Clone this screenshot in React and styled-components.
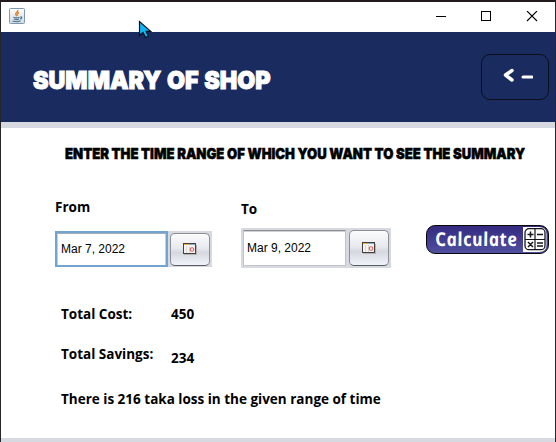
import React from "react";
import styled, { createGlobalStyle } from "styled-components";

const Global = createGlobalStyle`
  * { box-sizing: border-box; }
  body { margin: 0; background: #fff; overflow: hidden; }
`;

const Window = styled.div`
  position: relative;
  width: 556px;
  height: 442px;
  display: flex;
  flex-direction: column;
  background: #fff;
  border: 1px solid #25262a;
  border-top: 2px solid #231a1b;
  border-bottom: 0;
  color: #000;
`;

const TitleBar = styled.div`
  height: 30px;
  flex: none;
  display: flex;
  align-items: flex-start;
  justify-content: space-between;
  padding: 6px 17px 0 8px;
`;

const Controls = styled.div`
  display: flex;
  gap: 35px;
  padding-top: 3px;
`;

const Icon = styled.svg`
  display: block;
  flex: none;
`;

const Cursor = styled(Icon)`
  position: absolute;
  left: 137px;
  top: 18px;
`;

const Header = styled.header`
  height: 90px;
  flex: none;
  display: flex;
  justify-content: space-between;
  align-items: flex-start;
  padding: 22px 6px 0 32px;
  background: #192b5f;
`;

const Fitted = styled.span`
  display: block;
  white-space: nowrap;
  transform-origin: 0 50%;
  transform: scaleX(${(p) => p.$scale || 1});
`;

const Title = styled.h1`
  margin: 11px 0 0;
  width: 240px;
  color: #fff;
  font: 900 25px/30px Inter, sans-serif;
  word-spacing: 1px;
  -webkit-text-stroke: 1px #fff;
`;

const BackButton = styled.button`
  width: 68px;
  height: 46px;
  display: flex;
  align-items: center;
  justify-content: center;
  padding: 0 0 4px 1px;
  border: 1px solid #0c0f18;
  border-radius: 9px;
  background: transparent;
`;

const Strip = styled.div`
  height: ${(p) => p.$height}px;
  flex: none;
  background: #d6d9df;
`;

const Body = styled.main`
  height: 310px;
  flex: none;
`;

const Subtitle = styled.h2`
  margin: 0;
  padding: 16px 0 0 64px;
  height: 66px;
  font: 900 15px/20px Inter, sans-serif;
  -webkit-text-stroke: 0.5px #000;
`;

const Range = styled.section`
  display: flex;
  align-items: flex-start;
  height: 110px;
  padding-left: 54px;
`;

const Field = styled.div`
  width: ${(p) => p.$width}px;
  margin-right: ${(p) => p.$after}px;
  padding-top: ${(p) => p.$top}px;
`;

const Label = styled.div`
  font: 700 13.5px/18px "Open Sans", sans-serif;
`;

const Picker = styled.div`
  display: flex;
  align-items: center;
  justify-content: space-between;
  height: ${(p) => p.$height}px;
  margin-top: ${(p) => p.$gap}px;
  padding: ${(p) => (p.$focused ? "0 2px 0 0" : "0 2px")};
  background: #d6d9df;
`;

const DateInput = styled.div`
  width: ${(p) => (p.$focused ? 113 : 103)}px;
  height: 36px;
  display: flex;
  align-items: center;
  padding-left: ${(p) => (p.$focused ? 4 : 3)}px;
  background: #fff;
  border: ${(p) => (p.$focused ? "2px solid #73a4d1" : "1px solid #c0c2c5")};
  border-top-color: ${(p) => (p.$focused ? "#73a4d1" : "#8d8e91")};
  box-shadow: inset 0 1px 0 ${(p) => (p.$focused ? "#a5adb6" : "#cfd0d2")}${(p) => (p.$focused ? ", inset 1px 0 0 #c9ced4, inset -1px 0 0 #c9ced4" : "")};
  font: 12px/16px "Liberation Sans", Arial, sans-serif;
`;

const DateButton = styled.button`
  width: 40px;
  height: ${(p) => (p.$tall ? 36 : 33)}px;
  display: flex;
  align-items: center;
  justify-content: center;
  padding: 0;
  border: 1px solid #8b8e95;
  border-bottom-color: #555a65;
  border-radius: 5px;
  background: linear-gradient(#fbfbfc, #e8eaee 45%, #d5d8df 60%, #f0f3f8);
`;

const Calculate = styled.button`
  width: 123px;
  height: 29px;
  margin-top: 31px;
  display: flex;
  align-items: center;
  justify-content: space-between;
  padding: 0 1px 0 9px;
  border: 1px solid #08080c;
  border-radius: 9px;
  background: linear-gradient(#342a80, #50509f);
  color: #fff;
  font: italic 700 19px/24px "Open Sans", sans-serif;
`;

const CalculateText = styled.span`
  display: block;
  width: 82px;
  white-space: nowrap;
  transform: translate(-1px, -1px) skewX(10deg) scaleX(0.915);
  transform-origin: 0 50%;
  letter-spacing: 0.6px;
`;

const Results = styled.section`
  display: grid;
  grid-template-columns: 110px 1fr;
  padding-left: 60px;
`;

const Cell = styled(Label)`
  height: ${(p) => p.$height}px;
  padding-top: ${(p) => p.$top || 0}px;
`;

const Message = styled(Label)`
  padding: 1px 0 0 60px;
`;

function JavaIcon() {
  return (
    <Icon width="16" height="16" viewBox="0 0 16 16">
      <defs>
        <linearGradient id="java" x1="0" y1="0" x2="0" y2="1">
          <stop offset="0" stopColor="#fff" />
          <stop offset="1" stopColor="#d0d9e0" />
        </linearGradient>
      </defs>
      <rect x=".5" y=".5" width="15" height="15" rx="1" fill="url(#java)" stroke="#7e99ad" />
      <path d="M8.7 2c.8 2-2.7 2.5-2 4.4.2.7.9 1.1 1.1 1.8M10 4.5c-2 1-2 1.8-1.3 3" fill="none" stroke="#e7842f" strokeWidth="1.4" />
      <path d="M4.3 9.2c2 .8 5 .5 6.2 0M5 11c1.5.6 4 .6 5 0M3.5 13c2.5.8 6.5.7 8-.3M11.3 8.8c2-.3 1.8 1.7-.3 2.2" fill="none" stroke="#44718f" strokeWidth="1.2" />
    </Icon>
  );
}

function CalendarIcon() {
  return (
    <Icon width="14" height="12" viewBox="0 0 14 12">
      <path d="M1 11.5h13M13.5 2v9" stroke="#b2b4b8" />
      <rect x=".5" y=".5" width="12" height="10" fill="#f5f4f1" stroke="#46403c" />
      <path d="M1 1.5h5" stroke="#f2aa3a" />
      <path d="M6 1.5h6" stroke="#87a9d7" />
      <path d="M3.5 3v7M6.5 3v7" stroke="#d8d7d4" />
      <circle cx="9" cy="6.5" r="1.8" fill="#fff" stroke="#df5b58" strokeWidth="1.1" />
    </Icon>
  );
}

function CalculatorIcon() {
  return (
    <Icon width="24" height="25" viewBox="0 0 24 25">
      <path d="M0 0h16q7.5 0 7.5 7v11q0 7-7.5 7H0z" fill="#fff" />
      <rect x="2" y="1.7" width="20" height="21" rx="4" fill="#fff" stroke="#17171b" strokeWidth="1.3" />
      <path d="M12 2v20.5M2 12.5h20" stroke="#17171b" strokeWidth="1.2" />
      <path d="M4.5 7.5h6M7.5 4.5v6M14 7.5h6M5 15l5 5M10 15l-5 5M14 16h6M14 19h6" stroke="#17171b" strokeWidth="1.5" />
    </Icon>
  );
}

export default function App() {
  return (
    <>
      <Global />
      <Window>
        <TitleBar>
          <JavaIcon />
          <Controls>
            <Icon width="10" height="10"><path d="M0 5.5h10" stroke="#000" /></Icon>
            <Icon width="10" height="10"><rect x=".5" y=".5" width="9" height="9" fill="none" stroke="#000" /></Icon>
            <Icon width="12" height="11" viewBox="-1 0 12 11"><path d="M0 0l10 10M10 0l-10 10" stroke="#000" strokeWidth="1.1" /></Icon>
          </Controls>
        </TitleBar>
        <Header>
          <Title><Fitted $scale={0.933}>SUMMARY OF SHOP</Fitted></Title>
          <BackButton aria-label="Back">
            <Icon width="34" height="16" viewBox="0 0 34 16">
              <path d="M13 3.5L6.500 8l6.500 5" fill="none" stroke="#fff" strokeWidth="3.5" strokeLinecap="round" strokeLinejoin="round" />
              <path d="M24 10h9" stroke="#fff" strokeWidth="3" strokeLinecap="round" />
            </Icon>
          </BackButton>
        </Header>
        <Strip $height={6} />
        <Body>
          <Subtitle><Fitted $scale={0.875}>ENTER THE TIME RANGE OF WHICH YOU WANT TO SEE THE SUMMARY</Fitted></Subtitle>
          <Range>
            <Field $width={157} $after={29} $top={4}>
              <Label>From</Label>
              <Picker $focused $height={36} $gap={15}>
                <DateInput $focused>Mar 7, 2022</DateInput>
                <DateButton><CalendarIcon /></DateButton>
              </Picker>
            </Field>
            <Field $width={150} $after={35} $top={6}>
              <Label>To</Label>
              <Picker $height={40} $gap={10}>
                <DateInput>Mar 9, 2022</DateInput>
                <DateButton $tall><CalendarIcon /></DateButton>
              </Picker>
            </Field>
            <Calculate><CalculateText>Calculate</CalculateText><CalculatorIcon /></Calculate>
          </Range>
          <Results>
            <Cell $height={40} $top={1}>Total Cost:</Cell>
            <Cell $height={40} $top={1}>450</Cell>
            <Cell $height={45} $top={1}>Total Savings:</Cell>
            <Cell $height={45} $top={5}>234</Cell>
          </Results>
          <Message>There is 216 taka loss in the given range of time</Message>
        </Body>
        <Strip $height={4} />
        <Cursor width="14" height="20" viewBox="0 0 14 20">
          <path d="M1.5 1.5v14l3.5-3 2.5 5 2.7-1.2-2-5h4.500z" fill="#10b4f5" stroke="#06131e" strokeWidth="1.2" />
        </Cursor>
      </Window>
    </>
  );
}
